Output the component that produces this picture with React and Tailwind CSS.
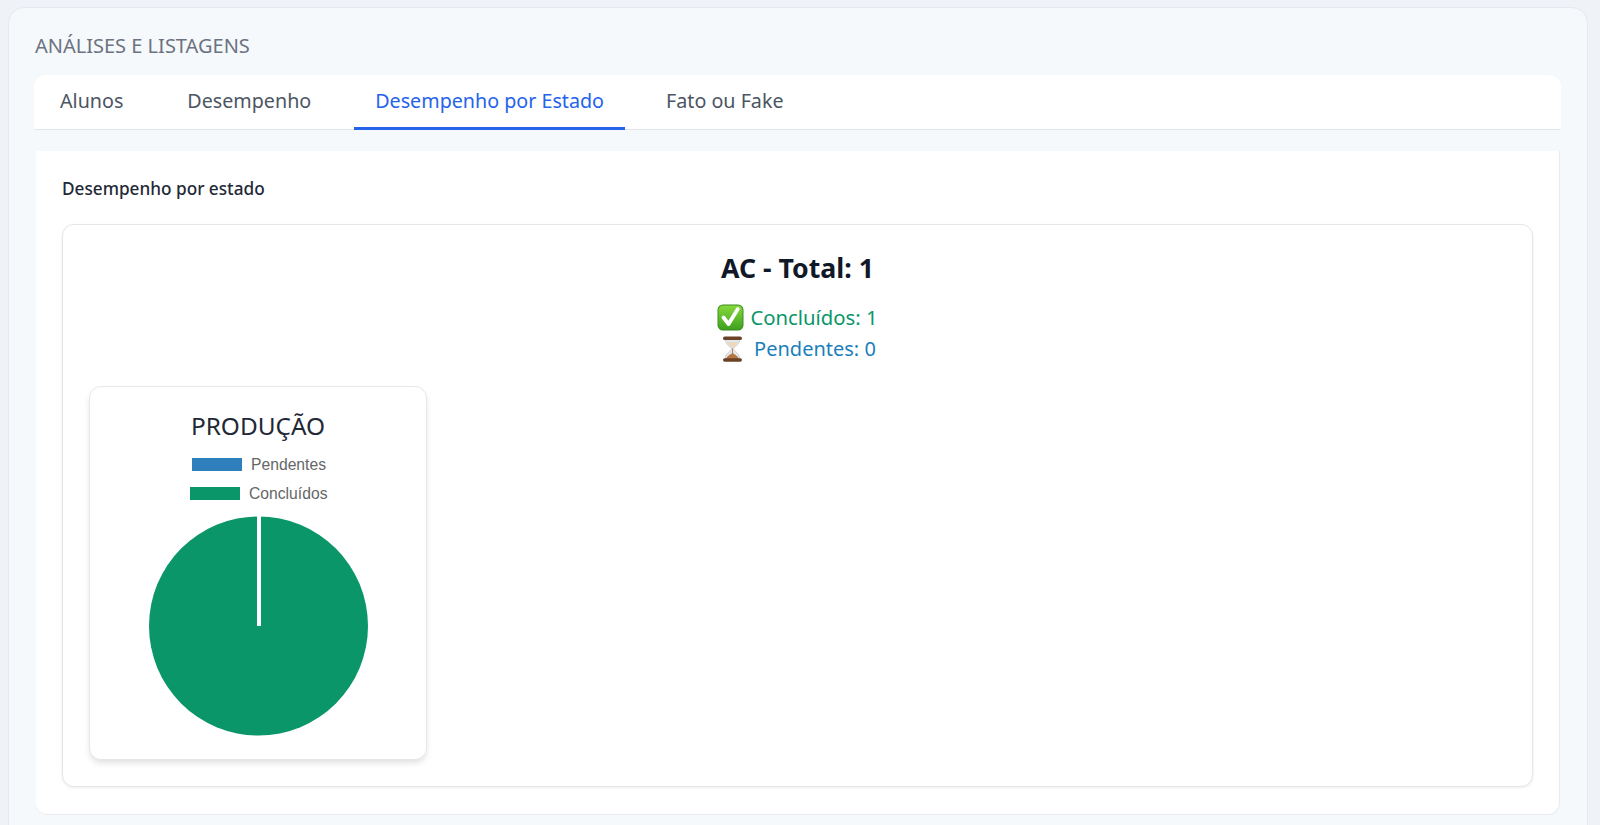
import React from 'react';

const tabs = [
  { label: 'Alunos' },
  { label: 'Desempenho' },
  { label: 'Desempenho por Estado', active: true },
  { label: 'Fato ou Fake', extra: '-ml-[2px]' },
];

function CheckEmoji() {
  return (
    <svg width="27" height="27" viewBox="0 0 27 27" className="shrink-0">
      <defs>
        <linearGradient id="chk" x1="0" y1="0" x2="0" y2="1">
          <stop offset="0" stopColor="#86d93c" />
          <stop offset="1" stopColor="#3fa020" />
        </linearGradient>
      </defs>
      <rect x="0.5" y="0.5" width="26" height="26" rx="5.5" fill="#3a8f1a" />
      <rect x="1.5" y="1.5" width="24" height="24" rx="4.5" fill="url(#chk)" />
      <path d="M6.5 13.5 L11.6 20 L20.8 5" fill="none" stroke="#ffffff" strokeWidth="3.8" strokeLinecap="round" strokeLinejoin="round" />
    </svg>
  );
}

function HourglassEmoji() {
  return (
    <svg width="21" height="26" viewBox="0 0 20 26" preserveAspectRatio="none" className="shrink-0">
      <path d="M3 3 C3 9 9 11 9 13 C9 15 3 17 3 23 L17 23 C17 17 11 15 11 13 C11 11 17 9 17 3 Z" fill="#e3e6ea" stroke="#b9bdc2" strokeWidth="0.6" />
      <path d="M5 6 L15 6 C14.5 9 11 10.5 10.4 13 L9.6 13 C9 10.5 5.5 9 5 6 Z" fill="#ecd9bd" />
      <path d="M4 23 C4.5 20 8 18.5 10 17 C12 18.5 15.5 20 16 23 Z" fill="#b5763f" />
      <rect x="9.6" y="12.5" width="0.8" height="6" fill="#b5763f" />
      <rect x="1" y="0.5" width="18" height="3.5" rx="1.6" fill="#6b4226" />
      <rect x="1" y="22.2" width="18" height="3.5" rx="1.6" fill="#6b4226" />
    </svg>
  );
}

function PieChart() {
  return (
    <svg width="336" height="290" viewBox="0 0 336 290" className="mt-1 block" style={{ fontFamily: '"Liberation Sans", Arial, sans-serif' }}>
      <rect x="102" y="10" width="50" height="13" fill="#2e7fbc" />
      <text x="161" y="22" fontSize="15.7" fill="#666666">Pendentes</text>
      <rect x="100" y="39" width="50" height="13" fill="#0a9669" />
      <text x="159" y="51" fontSize="15.7" fill="#666666">Concluídos</text>
      <circle cx="168.5" cy="178" r="109.5" fill="#0a9669" />
      <rect x="167" y="68" width="4" height="110" fill="#ffffff" />
    </svg>
  );
}

export default function App() {
  return (
    <div
      className="h-screen overflow-hidden bg-[#eff3f8] pt-[7px] pl-2 pr-3"
      style={{ fontFamily: '"Noto Sans", "Open Sans", sans-serif' }}
    >
      <div className="h-[900px] rounded-t-2xl border border-[#e6eaf0] bg-[#f6f9fb] px-6 pt-[26px]">
        <h2 className="pl-[2px] text-[20px] leading-6 uppercase text-[#6b7280] mb-[17px]">Análises e listagens</h2>

        <div className="ml-px mr-[2px] flex h-[55px] gap-[22px] rounded-t-xl border-b border-[#e2e6ea] bg-white pl-[5px]">
          {tabs.map((t) => (
            <div
              key={t.label}
              className={`px-[21px] text-[19.7px] leading-[52px] ${t.extra || ''} ${
                t.active ? 'border-b-[3px] border-[#2563eb] text-[#2563eb] h-[55px]' : 'text-[#4b5563]'
              }`}
            >
              {t.label}
            </div>
          ))}
        </div>

        <div className="mx-[3px] mt-[21px] h-[664px] rounded-b-xl border-r border-b border-[#e9ebee] bg-white px-[26px] pt-[26px]">
          <h3 className="text-[17.2px] leading-6 font-medium text-[#1f2937] mb-[23px]">Desempenho por estado</h3>

          <div className="h-[563px] rounded-xl border border-[#e5e7eb] bg-white shadow-[0_1px_3px_rgba(0,0,0,0.08)] px-[26px] pt-[25px]">
            <div className="text-center text-[26.7px] leading-9 font-bold text-[#111827]">AC - Total: 1</div>
            <div className="mt-[18px] flex items-center justify-center gap-[6px] h-[27px] text-[20.3px] text-[#0a9669]">
              <CheckEmoji />
              <span>Concluídos: 1</span>
            </div>
            <div className="mt-1 flex items-center justify-center gap-[11px] h-[27px] pl-[3px] text-[20px] text-[#1a7fbb]">
              <HourglassEmoji />
              <span>Pendentes: 0</span>
            </div>

            <div className="mt-6 h-[374px] w-[338px] rounded-xl border border-[#e5e7eb] bg-white shadow-[0_4px_6px_-1px_rgba(0,0,0,0.12)]">
              <div className="pt-[21px] text-center text-[24.4px] leading-9 text-[#1f2937]">PRODUÇÃO</div>
              <PieChart />
            </div>
          </div>
        </div>
      </div>
    </div>
  );
}
